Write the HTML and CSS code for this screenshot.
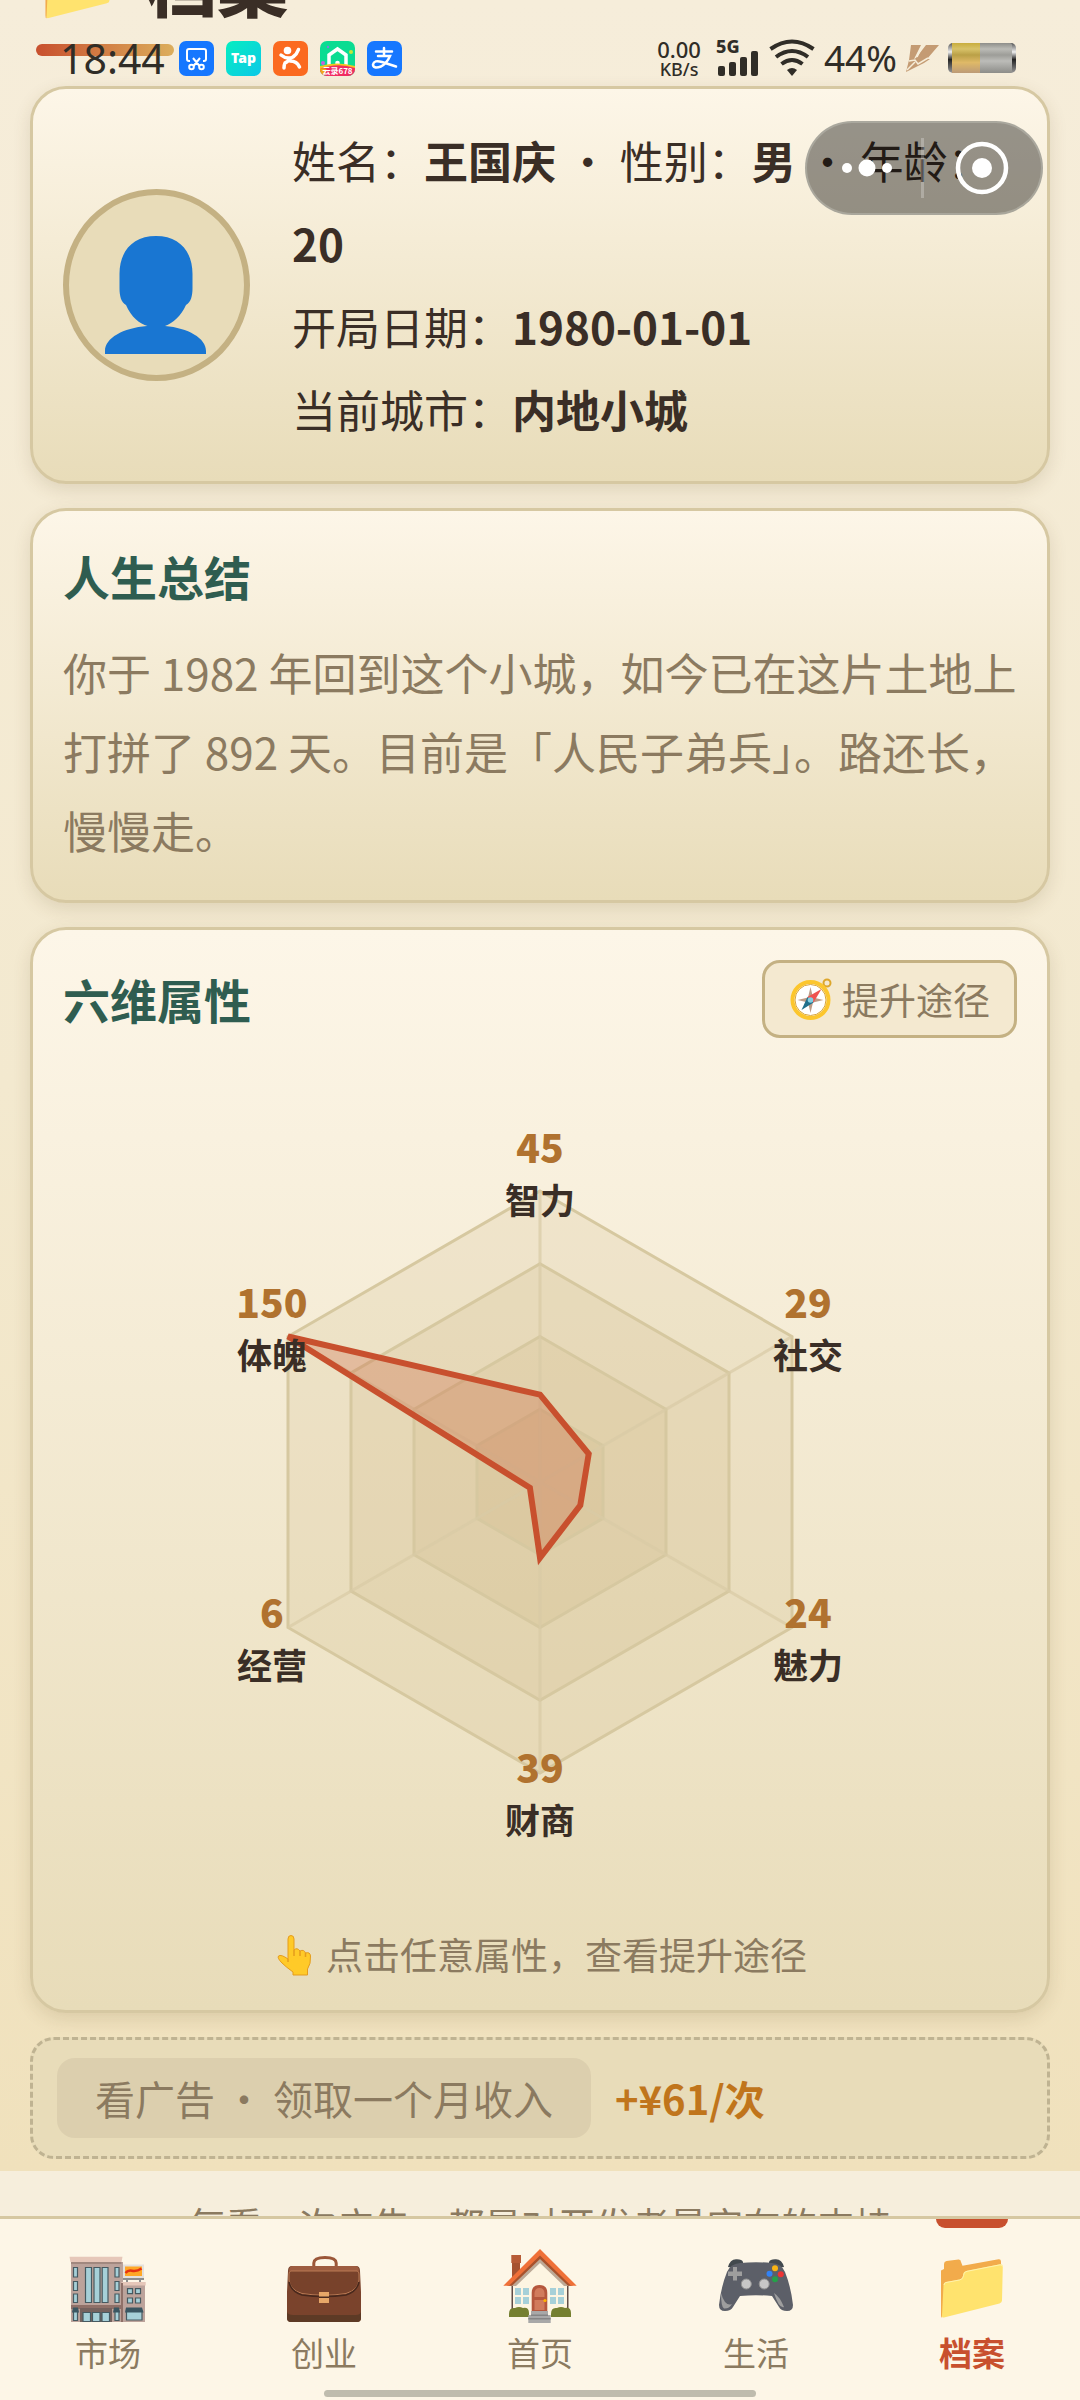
FILE: index.html
```html
<!DOCTYPE html>
<html lang="zh-CN">
<head>
<meta charset="utf-8">
<meta name="viewport" content="width=device-width, initial-scale=1">
<title>档案</title>
<link rel="stylesheet" href="styles.css">
</head>
<body>
<svg class="defs" aria-hidden="true">
  <symbol id="folder" viewBox="0 0 80 80">
    <path fill="#f2ab4b" d="M9 23.500L12 22V17Q12 14.500 14.500 14L26.500 12.500Q29 12.300 29 15L30.500 18.700L66.500 12.300Q69 12 69 14.500V30L12 60L10 70.700Q9 70.500 9 68z"/>
    <path fill="#ffe36e" d="M11.500 38Q11.500 35.500 14 35L27.500 32.500Q31 31.500 31 28.500Q31 24.500 35 23.800L68 17.300Q70.800 17 70.800 19.500L70 53.500Q70 55.700 67.500 56.500L12 70.500Q10 71 10 69z"/>
    <path fill="none" stroke="#fff3ae" stroke-width="1" d="M12 38Q12 35.800 14 35.500L27.500 33Q31.500 32 31.500 28.500Q31.500 24.800 35 24.300L68 17.800Q70.300 17.500 70.300 19.500"/>
  </symbol>
</svg>
<div class="app">
  <main class="page">
    <div class="content">
      <header class="page-head">
        <h1 class="page-title"><svg class="title-icon" aria-hidden="true"><use href="#folder"/></svg><span>档案</span></h1>
        <div class="title-bar"></div>
      </header>

      <section class="card profile">
        <div class="avatar">
          <svg viewBox="6 6 175 180" aria-hidden="true" fill="#1976d2">
            <path d="M93 47C70 47 56.500 62 56.500 85V99C56.500 107 58 113 63 116C68 128 77 135 84.500 137H84C60 139 42 149 42 162V165H143V162C143 149 125 139 102 137C110 134 118 127 123 116C128 113 129.500 107 129.500 99V85C129.500 62 116 47 93 47z"/>
          </svg>
        </div>
        <div class="facts">
          <p>姓名：<b>王国庆</b> ・ 性别：<b>男</b> ・ 年龄：<b>20</b></p>
          <p>开局日期：<b>1980-01-01</b></p>
          <p>当前城市：<b>内地小城</b></p>
        </div>
      </section>

      <section class="card summary">
        <h2 class="card-title">人生总结</h2>
        <p class="summary-text">你于 1982 年回到这个小城，如今已在这片土地上打拼了 892 天。目前是「人民子弟兵」。路还长，慢慢走。</p>
      </section>

      <section class="card attributes">
        <div class="card-head">
          <h2 class="card-title">六维属性</h2>
          <button class="ways" type="button">
            <svg class="ways-icon" viewBox="0 0 44 44" aria-hidden="true">
              <circle cx="38" cy="6" r="3.500" fill="none" stroke="#dda62c" stroke-width="2"/>
              <circle cx="21.500" cy="23" r="18" fill="#fff" stroke="#fcc62d" stroke-width="4"/>
              <circle cx="21.500" cy="23" r="15.500" fill="none" stroke="#d9a53a" stroke-width="1"/>
              <path fill="#bd9c88" d="M21.500 10L24 20.500L34.500 23L24 25.500L21.500 36L19 25.500L8.500 23L19 20.500z"/>
              <path fill="#ef5350" d="M32.500 12L24.500 25.500L18.500 20z"/>
              <path fill="#1f6f8b" d="M12.500 33L18.500 20L24.500 25.500z"/>
              <circle cx="21.500" cy="23" r="2.800" fill="#82cfe3"/>
            </svg>
            <span>提升途径</span>
          </button>
        </div>
        <div class="radar">
          <svg class="radar-chart" viewBox="0 0 954 890" aria-hidden="true">
            <g class="rings">
              <polygon points="477,153 729,298.500 729,589.500 477,735 225,589.500 225,298.500"/>
              <polygon points="477,225.750 666,334.875 666,553.125 477,662.250 288,553.125 288,334.875"/>
              <polygon points="477,298.500 603,371.250 603,516.750 477,589.500 351,516.750 351,371.250"/>
              <polygon points="477,371.250 540,407.625 540,480.375 477,516.750 414,480.375 414,407.625"/>
            </g>
            <path class="axes" d="M477 153V735M225 298.500L729 589.500M729 298.500L225 589.500"/>
            <polygon class="values" points="477,356.700 525.700,415.900 517.300,467.300 477,519.700 466.900,449.800 225,298.500"/>
          </svg>
          <button class="attr top" type="button"><b>45</b><span>智力</span></button>
          <button class="attr right upper" type="button"><b>29</b><span>社交</span></button>
          <button class="attr right lower" type="button"><b>24</b><span>魅力</span></button>
          <button class="attr bottom" type="button"><b>39</b><span>财商</span></button>
          <button class="attr left lower" type="button"><b>6</b><span>经营</span></button>
          <button class="attr left upper" type="button"><b>150</b><span>体魄</span></button>
        </div>
        <p class="hint">
          <svg class="hint-icon" viewBox="0 -2 44 44" aria-hidden="true">
            <path fill="#ffca28" stroke="#e59c1c" stroke-width="1" d="M15 25V5Q15 1.500 18 1.500Q21 1.500 21 5V16Q24 13 27 17Q31 15 32.500 19Q37 17.500 37.500 22Q38 30 34.500 35V41H20V38Q13 33 9 29Q4 24 5.500 22Q8 20 15 25z"/>
            <path fill="none" stroke="#e59c1c" stroke-width="1.500" d="M21 16V22M27 17V22M32.500 19V23M15 25V28"/>
          </svg>
          <span>点击任意属性，查看提升途径</span>
        </p>
      </section>

      <section class="ad">
        <button class="ad-button" type="button">看广告 ・ 领取一个月收入</button>
        <b class="ad-reward">+¥61/次</b>
      </section>
    </div>
    <p class="support">每看一次广告，都是对开发者最实在的支持</p>
  </main>

  <nav class="tabs">
    <a class="tab" href="#market">
      <svg viewBox="0 0 80 80" aria-hidden="true">
        <path fill="#bca39b" d="M3 15H55V75H3z"/><path fill="#e6c7b9" d="M1.500 9.700H54.500L53.500 15H2.500z"/><path fill="#a1887f" d="M3 15H53.500V17H3z"/>
        <path fill="#bca39b" d="M55 38H77V75H55z"/><path fill="#e6c7b9" d="M53.500 35H77.700V38.500H53.500z"/>
        <path fill="#8f7068" d="M53 36H55V75H53zM3 58H55V62H3z"/><path fill="#75625e" d="M12 61H44V75H12z"/>
        <path fill="#e4e0dc" d="M55 17.500H76V31H55z"/><path fill="#ffa726" d="M57 19.500H74V29H57z"/><path fill="none" stroke="#e53212" stroke-width="2.500" d="M57.500 26C62 20 65 27.500 73.500 21.500"/><path fill="#8d8d8d" d="M55 31H76V33H55zM58 33H60V35H58zM71 33H73V35H71z"/>
        <g fill="#a6d0d8" stroke="#465a61" stroke-width="1.200"><path d="M17.500 20.500H23.500V55.500H17.500zM26 20.500H32V55.500H26zM34.200 20.500H40V55.500H34.200zM5.500 20.500H9.500V30H5.500zM5.500 34.500H9.500V43.500H5.500zM5.500 47H9.500V55.500H5.500zM47 20.500H51V30H47zM47 34.500H51V43.500H47zM47 47H51V55.500H47zM5.500 64H9.500V73.500H5.500zM47 64H51V73.500H47zM59.500 41.700H64.500V46.700H59.500zM67.500 41.700H72.500V46.700H67.500zM59.500 51H64.500V56H59.500zM67.500 51H72.500V56H67.500zM58.500 64H74V73H58.500zM15 65.500H22.500V74.500H15zM24.500 65.500H32V74.500H24.500zM34 65.500H41.500V74.500H34z"/></g>
        <path fill="#3a5661" d="M5 60.500H10L11 65.500H4zM46 60.500H51L52 65.500H45zM58 60.500H74L75.500 65.500H57z"/>
      </svg>
      <span>市场</span>
    </a>
    <a class="tab" href="#business">
      <svg viewBox="0 0 80 80" aria-hidden="true">
        <path fill="none" stroke="#9b5638" stroke-width="3" d="M29.800 19V16Q30 10.500 41 10.500T52.200 16V19"/>
        <path fill="#7a432c" d="M4 24Q4 19 8 19H72Q76 19 76 24L77 45V71Q77 75 73 75H7Q3 75 3 71V45z"/>
        <path fill="#9d5c40" d="M5 24Q5 19 9 19H71Q75 19 75 24z"/>
        <path fill="#5d3a25" d="M3 65Q4 68 9 68H72Q76 68 77 65V71Q77 75 73 75H7Q3 75 3 71z"/>
        <path fill="#78422b" stroke="#b97a54" stroke-width="1" d="M7 24H73Q75 24 75 27V33Q74 43 62 46.500Q40 50 18 46.500Q6 43 5 33V27Q5 24 7 24z"/>
        <path fill="none" stroke="#48281c" stroke-width="1.500" d="M5 35Q7 44.500 18 48Q40 51 62 48Q73 44.500 75 35"/>
        <path fill="#e7a768" d="M35 45H45V56H35z"/><path fill="#4d2b1e" d="M35 49.500H45V51H35z"/>
      </svg>
      <span>创业</span>
    </a>
    <a class="tab" href="#home">
      <svg viewBox="0 0 80 80" aria-hidden="true">
        <path fill="#a65331" d="M12 14H20V32H12z"/><path fill="#b75b36" d="M11.300 8H21V16H11.300z"/>
        <path fill="#fdf5e2" d="M12 35L40 9L68 35V65H12z"/><path fill="#5f4b45" d="M11.500 39H13V65H11.500zM67 39H68.500V65H67z"/>
        <path fill="#bda996" d="M40 9L72 39H64L40 16L16 39H8z"/><path fill="#a8522c" d="M40 7L73 38.700H68L40 12L12 38.700H7z"/>
        <path fill="#ef7038" d="M40 2L76.700 38.700H71L40 8.500L9 38.700H3.300z"/>
        <path fill="#b5573d" d="M31.700 65V46Q31.700 38 39.500 38T47.300 46V65z"/><path fill="#d17b5c" d="M34.500 50V46Q35 41 39.500 41T44.500 46V50zM34.500 53H44.500V63H34.500z"/><circle cx="45" cy="53.500" r="1.600" fill="#ffb300"/>
        <path fill="#a6d0d8" d="M15 41H21V48H15zM23 41H29V48H23zM15 50H21V57H15zM23 50H29V57H23zM50 41H56V48H50zM58 41H64V48H58zM50 50H56V57H50zM58 50H64V57H58z"/>
        <path fill="#757f30" d="M9 67Q9 60 15 61Q19 59 23 61Q29 60 29 66V70H9zM51 67Q51 60 57 61Q61 59 65 61Q71 60 71 66V70H51z"/>
        <path fill="#a8a8a8" d="M31 64H48V68H50.700V76H28.300V68H31z"/><path fill="#858585" d="M31 67.500H48V69H31zM28.300 71H50.700V72.500H28.300z"/>
      </svg>
      <span>首页</span>
    </a>
    <a class="tab" href="#life">
      <svg viewBox="0 0 80 80" aria-hidden="true">
        <path fill="#42494e" d="M12 20Q14 12.500 20 12.300Q26 12 27 15V22zM68 20Q66 12.500 60 12.300Q54 12 53 15V22z"/>
        <path fill="#5c5f68" d="M24 16Q40 14.500 56 16Q66 17 69 25Q75 40 77 58Q77 64 71 64Q65 64 63 60L56 49Q40 47.500 24 49L17 60Q15 64 9 64Q3 64 3 58Q5 40 11 25Q14 17 24 16z"/>
        <path fill="#9e9e9e" d="M17 20H21V24.500H26V29H21V33.500H17V29H12V24.500H17zM5 46Q9 60 16 57Q13 62 8 61.500Q5 60 5 46zM58 46Q64 50 68 60Q63 62 58 46z"/>
        <g fill="#c7c7c7" stroke="#939393"><circle cx="30.300" cy="37" r="5"/><circle cx="48.200" cy="37" r="5"/></g>
        <circle cx="59" cy="21.300" r="3" fill="#f9b414"/><circle cx="53.500" cy="26.700" r="3" fill="#3182f6"/><circle cx="64.800" cy="27.200" r="3" fill="#ee3333"/><circle cx="59" cy="32.300" r="3" fill="#25a049"/>
      </svg>
      <span>生活</span>
    </a>
    <a class="tab active" href="#archive" aria-current="page">
      <svg aria-hidden="true"><use href="#folder"/></svg>
      <span>档案</span>
    </a>
  </nav>

  <div class="status">
    <div class="status-left">
      <span class="clock">18:44</span>
      <svg class="app-icon" viewBox="0 0 35 35" aria-hidden="true"><rect width="35" height="35" rx="7" fill="#1677ff"/><g fill="none" stroke="#fff" stroke-width="2"><path d="M11 20H10Q8 20 8 18V10Q8 8 10 8H25Q27 8 27 10V18Q27 20 25 20H24M14 17L20.500 25M21 17L14.500 25"/><circle cx="12.500" cy="26" r="2.300"/><circle cx="22.500" cy="26" r="2.300"/></g></svg>
      <svg class="app-icon" viewBox="0 0 35 35" aria-hidden="true"><defs><linearGradient id="tap" x2="1" y2="1"><stop stop-color="#06eec0"/><stop offset="1" stop-color="#0cc8e8"/></linearGradient></defs><rect width="35" height="35" rx="7" fill="url(#tap)"/><text class="tap-text" x="17.500" y="22" text-anchor="middle">Tap</text></svg>
      <svg class="app-icon" viewBox="0 0 35 35" aria-hidden="true"><rect width="35" height="35" rx="7" fill="#fb6a20"/><circle cx="14.500" cy="9.500" r="3.800" fill="#fff"/><path fill="none" stroke="#fff" stroke-width="3.500" stroke-linecap="round" stroke-linejoin="round" d="M8 14Q14 19 20 16Q24 13 25.500 8.500M17 17Q15 21 12 22Q11 24 11 27M17 20Q24 20 26.500 26"/></svg>
      <svg class="app-icon" viewBox="0 0 35 35" aria-hidden="true"><defs><clipPath id="round"><rect width="35" height="35" rx="7"/></clipPath></defs><g clip-path="url(#round)"><rect width="35" height="35" fill="#0bdc92"/><path fill="none" stroke="#fff" stroke-width="3.500" d="M9 26V14L17.500 8L26 14V26"/><circle cx="17.500" cy="22" r="2.300" fill="#fff"/><circle cx="31" cy="11" r="2" fill="#c6e63c"/><circle cx="3" cy="22" r="2" fill="#c563e0"/><circle cx="8" cy="6" r="1.200" fill="#7f7fe0"/><path fill="#f4c520" d="M0 25Q17 20 35 25V30H0z"/><path fill="#f12d62" d="M0 28Q17 21 35 27V35H0z"/><path fill="#f0a818" d="M0 28Q5 26 7 29L3 35H0z"/></g><text class="promo-text" x="17.500" y="33" text-anchor="middle">云录678</text></svg>
      <svg class="app-icon" viewBox="0 0 35 35" aria-hidden="true"><rect width="35" height="35" rx="7" fill="#1677ff"/><path fill="none" stroke="#fff" stroke-width="2.500" stroke-linecap="round" d="M9 10.500H25M17 7V15M11 15H23Q20 22 14 25.500Q6 28 6 23.500Q7 18.500 15 21L29 25.500"/></svg>
    </div>
    <div class="status-right">
      <div class="speed"><span>0.00</span><small>KB/s</small></div>
      <svg class="signal" viewBox="0 0 44 38" aria-hidden="true"><text class="network" x="0" y="14">5G</text><g fill="#302d27"><rect x="2" y="27" width="7" height="10" rx="2"/><rect x="13" y="23" width="7" height="14" rx="2"/><rect x="24" y="18" width="7" height="19" rx="2"/><rect x="35" y="12" width="7" height="25" rx="2"/></g></svg>
      <svg class="wifi" viewBox="0 0 46 38" aria-hidden="true"><g fill="none" stroke="#302d27" stroke-width="4"><path d="M1.500 10Q23-5 44.500 10M7 18Q23 6 39 18M12.500 25Q23 17 33.500 25"/></g><path fill="#302d27" d="M18 31Q23 27 28 31L23 37z"/></svg>
      <span class="percent">44%</span>
      <svg class="bolt" viewBox="0 0 33 28" aria-hidden="true"><path fill="#c49b73" d="M5 1H15L8 15L10 14L20 1H33L21 15H24L18 19L0 28L3 16z"/><path stroke="#f6edd8" stroke-width="1.500" d="M1 26L9 18M3 17L9 16L12 20L22 14M17 1L11 13" fill="none"/></svg>
      <svg class="battery" viewBox="0 0 68 30" aria-hidden="true"><defs><linearGradient id="gold" x2="0" y2="1"><stop stop-color="#c9ad3d"/><stop offset=".2" stop-color="#d8c269"/><stop offset=".4" stop-color="#baa047"/><stop offset=".65" stop-color="#dfb967"/><stop offset="1" stop-color="#bd9b77"/></linearGradient><linearGradient id="steel" x2="0" y2="1"><stop stop-color="#8e8e8a"/><stop offset=".2" stop-color="#bbbbb6"/><stop offset=".4" stop-color="#9d9d98"/><stop offset=".6" stop-color="#bcbcb8"/><stop offset="1" stop-color="#8d8d89"/></linearGradient><linearGradient id="cap" x2="0" y2="1"><stop stop-color="#555"/><stop offset=".3" stop-color="#eee"/><stop offset=".55" stop-color="#222"/><stop offset="1" stop-color="#999"/></linearGradient></defs><rect width="68" height="30" rx="5" fill="url(#cap)"/><rect x="4" width="60" height="30" rx="2" fill="url(#steel)"/><rect x="4" width="28" height="30" fill="url(#gold)"/></svg>
    </div>
  </div>
  <div class="capsule">
    <button type="button" aria-label="更多"><svg viewBox="0 0 50 60" aria-hidden="true" fill="#fff"><circle cx="5" cy="30" r="5"/><circle cx="25" cy="30" r="8.500"/><circle cx="45" cy="30" r="5"/></svg></button>
    <i></i>
    <button type="button" aria-label="关闭"><svg viewBox="0 0 60 60" aria-hidden="true"><circle cx="30" cy="30" r="24" fill="none" stroke="#fff" stroke-width="4.500"/><circle cx="30" cy="30" r="10" fill="#fff"/></svg></button>
  </div>
  <div class="home-bar"></div>
</div>
</body>
</html>
```
FILE: styles.css
```css
* { box-sizing: border-box; }

body, h1, h2, p { margin: 0; }

body {
  font-family: "Noto Sans CJK SC", "Noto Sans", sans-serif;
  color: #3a2e26;
  background: #f6eedc;
}

svg { display: block; flex: none; }
.defs { position: absolute; width: 0; height: 0; }

button {
  font: inherit;
  color: inherit;
  border: 0;
  padding: 0;
  background: none;
}

.app {
  position: relative;
  height: 100vh;
  display: flex;
  flex-direction: column;
  overflow: hidden;
}

.page { flex: 1; min-height: 0; overflow: hidden; }

.content {
  display: flex;
  flex-direction: column;
  gap: 24px;
  padding: 0 30px 12px;
  background: linear-gradient(#f6edda, #f3e9cf 50%, #f0e1bc);
}

/* Page heading, scrolled up under the status bar */
.page-head {
  height: 86px;
  margin-bottom: -24px;
  padding: 0 6px 30px;
  display: flex;
  flex-direction: column;
  justify-content: flex-end;
  gap: 16px;
  overflow: hidden;
}

.page-title {
  display: flex;
  align-items: flex-start;
  gap: 26px;
  font-size: 71px;
  line-height: 72px;
  font-weight: 900;
}

.title-icon { width: 84px; height: 84px; }

.title-bar {
  flex: none;
  width: 138px;
  height: 12px;
  border-radius: 6px;
  background: linear-gradient(90deg, #c8502e, #dcae5c);
}

.card {
  padding: 30px;
  border: 3px solid #d6c8a2;
  border-radius: 36px;
  background: linear-gradient(#fdf6e8, #e8dcb9);
  box-shadow: 0 6px 18px rgba(90, 70, 30, .14);
}

.profile { display: flex; align-items: center; gap: 42px; }

.avatar {
  flex: none;
  width: 187px;
  height: 192px;
  border: 6px solid #c4b183;
  border-radius: 50%;
  background: #e8dcb9;
}

.facts { font-size: 44px; line-height: 83px; }

.card-title {
  font-size: 47px;
  line-height: 70px;
  font-weight: 700;
  color: #2f5d50;
}

.summary-text {
  margin-top: 22px;
  font-size: 44px;
  line-height: 79px;
  color: #8b7a60;
}

.card-head { display: flex; align-items: center; justify-content: space-between; }

.ways {
  display: flex;
  align-items: center;
  gap: 9px;
  height: 78px;
  padding: 0 24px;
  border: 3px solid #c4b183;
  border-radius: 18px;
  background: #f4e9d0;
  color: #8b7a60;
  font-size: 37px;
}

.ways-icon, .hint-icon { width: 44px; height: 44px; }

.radar { position: relative; }
.radar-chart { width: 100%; height: auto; }
.rings { fill: rgba(196, 177, 120, .16); stroke: #d6c8a0; stroke-width: 3; }
.axes { fill: none; stroke: #d8cba5; stroke-width: 3; opacity: .7; }
.values { fill: rgba(200, 80, 46, .26); stroke: #c8502e; stroke-width: 6; }

/* Attribute captions sit over the chart at its corners */
.attr {
  position: absolute;
  transform: translate(-50%, -50%);
  display: flex;
  flex-direction: column;
  align-items: center;
  font-size: 35px;
  line-height: 50px;
  font-weight: 700;
}
.attr b { font-size: 39px; line-height: 56px; color: #b0722f; }
.attr.top { left: 50%; top: 14.9%; }
.attr.bottom { left: 50%; top: 84.6%; }
.attr.left { left: 21.9%; }
.attr.right { left: 78.1%; }
.attr.upper { top: 32.4%; }
.attr.lower { top: 67.2%; }

.hint {
  display: flex;
  align-items: center;
  justify-content: center;
  gap: 9px;
  font-size: 37px;
  line-height: 52px;
  color: #8b7a60;
}

.ad {
  display: flex;
  align-items: center;
  gap: 24px;
  padding: 18px 24px;
  border: 3px dashed #bfb392;
  border-radius: 24px;
  background: #e8dcb9;
  font-size: 40px;
}

.ad-button {
  height: 80px;
  padding: 0 38px;
  border-radius: 18px;
  background: #dccfae;
  color: #8b7a60;
}

.ad-reward { color: #c0751c; }

.support {
  padding-top: 25px;
  text-align: center;
  font-size: 37px;
  line-height: 56px;
  color: #8b7a60;
}

.tabs {
  position: relative;
  flex: none;
  display: flex;
  padding-bottom: 23px;
  border-top: 3px solid #d6c8a2;
  background: #fdf6e7;
}

.tab {
  position: relative;
  flex: 1;
  display: flex;
  flex-direction: column;
  align-items: center;
  padding-top: 28px;
  font-size: 33px;
  line-height: 50px;
  color: #8b7a60;
  text-decoration: none;
}

.tab svg { width: 80px; height: 80px; }
.tab.active { color: #c8502e; font-weight: 700; }

.tab.active::before {
  content: "";
  position: absolute;
  top: 0;
  width: 72px;
  height: 9px;
  border-radius: 0 0 9px 9px;
  background: #c8502e;
}

/* System overlays */
.status {
  position: absolute;
  inset: 34px 64px auto 60px;
  height: 48px;
  display: flex;
  align-items: center;
  justify-content: space-between;
  font-family: "Noto Sans", sans-serif;
  color: #302d27;
}

.status-left, .status-right { display: flex; align-items: center; }
.status-left { gap: 12px; }
.status-right { gap: 9px; }
.clock { width: 107px; font-size: 41px; line-height: 48px; }
.app-icon { width: 35px; height: 35px; }
.tap-text { font: 900 14px "Noto Sans", sans-serif; fill: #fff; }
.promo-text { font: 700 8px "Noto Sans CJK SC", sans-serif; fill: #fff; }
.speed { display: flex; flex-direction: column; align-items: center; font-size: 22px; line-height: 22px; font-weight: 500; }
.speed small { font-size: 18px; line-height: 18px; }
.signal { width: 44px; height: 38px; margin-left: 6px; }
.network { font: 800 18px "Noto Sans", sans-serif; fill: #302d27; }
.wifi { width: 46px; height: 38px; }
.percent { font-size: 37px; line-height: 48px; }
.bolt { width: 33px; height: 28px; }
.battery { width: 68px; height: 30px; }

.capsule {
  position: absolute;
  top: 121px;
  right: 37px;
  width: 238px;
  height: 94px;
  padding-left: 6px;
  display: flex;
  align-items: center;
  justify-content: space-evenly;
  border: 2px solid rgba(190, 190, 180, .5);
  border-radius: 47px;
  background: rgba(0, 0, 0, .4);
}
.capsule i { width: 3px; height: 60px; background: rgba(255, 255, 255, .25); }
.capsule button:first-child svg { width: 50px; height: 60px; }
.capsule button:last-child svg { width: 60px; height: 60px; }

.home-bar {
  position: absolute;
  bottom: 3px;
  left: 30%;
  right: 30%;
  height: 7px;
  border-radius: 4px;
  background: #bfbcae;
}
```
